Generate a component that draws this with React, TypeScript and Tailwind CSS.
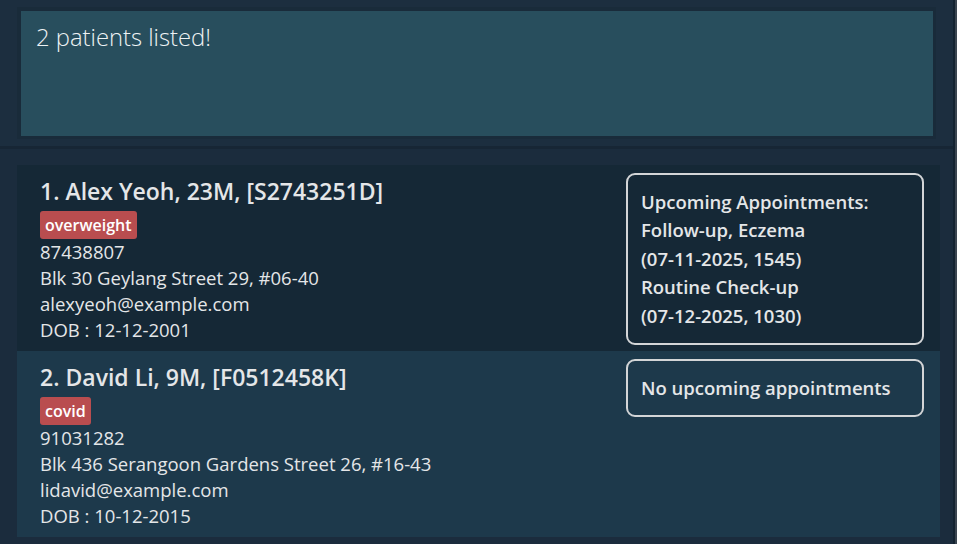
import React from "react";

interface Patient {
    index: number;
    title: string;
    tag: string;
    phone: string;
    address: string;
    email: string;
    dob: string;
    appointments: string[] | null;
}

const patients: Patient[] = [
    {
        index: 1,
        title: "Alex Yeoh, 23M, [S2743251D]",
        tag: "overweight",
        phone: "87438807",
        address: "Blk 30 Geylang Street 29, #06-40",
        email: "alexyeoh@example.com",
        dob: "12-12-2001",
        appointments: [
            "Follow-up, Eczema",
            "(07-11-2025, 1545)",
            "Routine Check-up",
            "(07-12-2025, 1030)",
        ],
    },
    {
        index: 2,
        title: "David Li, 9M, [F0512458K]",
        tag: "covid",
        phone: "91031282",
        address: "Blk 436 Serangoon Gardens Street 26, #16-43",
        email: "lidavid@example.com",
        dob: "10-12-2015",
        appointments: null,
    },
];

function PatientCard({ p }: { p: Patient }) {
    const odd = p.index % 2 === 1;
    return (
        <div
            className={
                odd
                    ? "flex h-[186px] bg-[#152836] pl-[23px] pr-[16px]"
                    : "flex h-[186px] bg-[#1d394b] pl-[23px] pr-[16px]"
            }
        >
            {/* details */}
            <div className="flex-1 pt-[11px] text-[#e4e6e8]">
                <div className="text-[23px] leading-[30px] font-semibold">
                    {p.index}. {p.title}
                </div>
                <div className="mt-[5px] flex">
                    <span className="h-[28px] rounded-[3px] bg-[#b94d4f] px-[5px] text-[16px] leading-[28px] font-semibold text-white">
                        {p.tag}
                    </span>
                </div>
                <div className="text-[18.5px] leading-[26px]">
                    <div>{p.phone}</div>
                    <div>{p.address}</div>
                    <div>{p.email}</div>
                    <div>DOB : {p.dob}</div>
                </div>
            </div>

            {/* appointments */}
            <div className="pt-[8px]">
                <div className="w-[298px] rounded-[9px] border-2 border-[#d3d5d7] px-[13px] py-[13px] text-[18.5px] leading-[28.4px] font-semibold text-[#e4e6e8]">
                    {p.appointments ? (
                        <>
                            <div>Upcoming Appointments:</div>
                            {p.appointments.map((a) => (
                                <div key={a}>{a}</div>
                            ))}
                        </>
                    ) : (
                        <div>No upcoming appointments</div>
                    )}
                </div>
            </div>
        </div>
    );
}

export default function App() {
    return (
        <div
            className="flex h-[544px] w-[957px] overflow-hidden bg-[#1c2e3f]"
            style={{ fontFamily: '"Open Sans", "Noto Sans", sans-serif' }}
        >
            <div className="flex w-[953px] flex-col">
                {/* result display */}
                <div className="h-[146px] px-[17px] pt-[7px]">
                    <div className="h-[132px] border-t-4 border-l-4 border-r-[3px] border-b-[3px] border-[#192b3a] bg-[#284e5d] px-[15px] pt-[9px] text-[23.8px] leading-[34px] font-light text-[#eef2f4]">
                        2 patients listed!
                    </div>
                </div>

                <div className="h-[3px] bg-[#172635]" />

                {/* patient list */}
                <div className="flex-1 bg-[#1b2c3d] px-[17px] pt-[16px]">
                    <div className="w-[923px]">
                        {patients.map((p) => (
                            <PatientCard key={p.index} p={p} />
                        ))}
                    </div>
                </div>
            </div>
            <div className="w-[2px] bg-[#142331]" />
            <div className="w-[2px] bg-[#3a4550]" />
        </div>
    );
}
